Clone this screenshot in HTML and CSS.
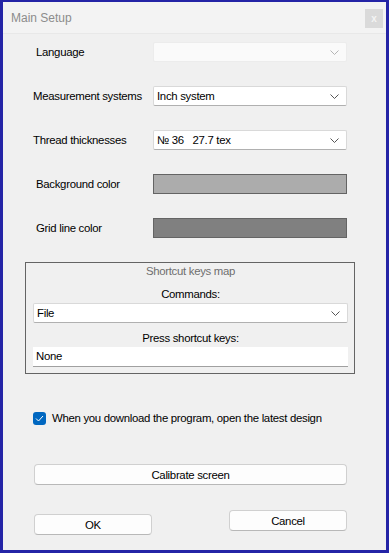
FILE: index.html
```html
<!DOCTYPE html>
<html>
<head>
	<meta charset="UTF-8">
	<title>Main Setup</title>
	<link rel="stylesheet" href="styles.css">
</head>
<body>
	<div class="window">
		<div class="titlebar">
			<span class="title">Main Setup</span>
			<span class="close">x</span>
		</div>
		<div class="content">
			<div class="fields">
				<span class="label indent">Language</span>
				<div class="select disabled">
					<span></span>
					<svg class="chev" width="9" height="5" viewBox="0 0 9 5"><polyline points="0.5,0.5 4.5,4.5 8.5,0.5" fill="none" stroke="#b5b5b5" stroke-width="1"/></svg>
				</div>

				<span class="label">Measurement systems</span>
				<div class="select">
					<span>Inch system</span>
					<svg class="chev" width="9" height="5" viewBox="0 0 9 5"><polyline points="0.5,0.5 4.5,4.5 8.5,0.5" fill="none" stroke="#555" stroke-width="1"/></svg>
				</div>

				<span class="label">Thread thicknesses</span>
				<div class="select">
					<span>№ 36&nbsp;&nbsp;&nbsp;27.7 tex</span>
					<svg class="chev" width="9" height="5" viewBox="0 0 9 5"><polyline points="0.5,0.5 4.5,4.5 8.5,0.5" fill="none" stroke="#555" stroke-width="1"/></svg>
				</div>

				<span class="label indent">Background color</span>
				<div class="swatch bg-color"></div>

				<span class="label indent">Grid line color</span>
				<div class="swatch grid-color"></div>
			</div>

			<div class="group">
				<div class="group-title">Shortcut keys map</div>
				<div class="group-label">Commands:</div>
				<div class="select">
					<span>File</span>
					<svg class="chev" width="9" height="5" viewBox="0 0 9 5"><polyline points="0.5,0.5 4.5,4.5 8.5,0.5" fill="none" stroke="#555" stroke-width="1"/></svg>
				</div>
				<div class="group-label">Press shortcut keys:</div>
				<div class="textbox">None</div>
			</div>

			<label class="check">
				<span class="box">
					<svg width="9" height="7" viewBox="0 0 9 7"><polyline points="1,3.5 3.5,6 8,1" fill="none" stroke="#fff" stroke-width="1"/></svg>
				</span>
				When you download the program, open the latest design
			</label>

			<div class="btn calibrate">Calibrate screen</div>

			<div class="actions">
				<div class="btn ok">OK</div>
				<div class="btn cancel">Cancel</div>
			</div>
		</div>
	</div>
</body>
</html>
```

FILE: styles.css
```css
	html,body{
		margin:0;
		padding:0;
	}
	body{
		font-family:"Liberation Sans",Arial,sans-serif;
		font-size:11.4px;
		letter-spacing:-0.3px;
		color:#000;
		background:#2424a6;
	}
	.window{
		box-sizing:border-box;
		width:389px;
		height:553px;
		border:3px solid #2424a6;
		border-top-width:2px;
		background:#f0f0f0;
	}
	.titlebar{
		display:flex;
		align-items:center;
		justify-content:space-between;
		height:31px;
		padding:0 3px 0 8px;
		background:#f3f3f3;
		border-bottom:1px solid #e8e8e8;
	}
	.title{
		color:#8c8c8c;
		font-size:12px;
		letter-spacing:0;
		margin-top:1px;
	}
	.close{
		display:flex;
		align-items:center;
		justify-content:center;
		width:18px;
		height:19px;
		margin-top:2px;
		background:#dadada;
		color:#f4f4f4;
		font-size:10px;
		font-weight:bold;
	}

	.content{
		padding:8px 0 0 30px;
	}
	.fields{
		display:grid;
		grid-template-columns:120px 194px;
		grid-auto-rows:20px;
		row-gap:24px;
		align-items:center;
	}
	.label{
		white-space:nowrap;
	}
	.label.indent{
		padding-left:3px;
	}

	.select{
		box-sizing:border-box;
		display:flex;
		align-items:center;
		justify-content:space-between;
		height:20px;
		padding:0 7px 0 3px;
		background:#fff;
		border:1px solid #d9d9d9;
		border-bottom-color:#b0b0b0;
		border-radius:2px;
	}
	.select.disabled{
		background:#fafafa;
		border-color:#ececec;
	}
	.swatch{
		box-sizing:border-box;
		height:20px;
		border:1px solid #646464;
	}
	.bg-color{
		background:#acacac;
	}
	.grid-color{
		background:#808080;
	}

	.group{
		box-sizing:border-box;
		width:330px;
		margin:24px 0 0 -8px;
		padding:0 6px 6px 7px;
		border:1px solid #646464;
	}
	.group-title{
		height:16px;
		line-height:16px;
		text-align:center;
		color:#6e6e6e;
	}
	.group-label{
		height:16px;
		line-height:16px;
		margin:7px 0 1px;
		text-align:center;
	}
	.textbox{
		box-sizing:border-box;
		height:20px;
		line-height:19px;
		padding:0 3px;
		background:#fff;
		border-bottom:1px solid #a0a0a0;
	}

	.check{
		display:flex;
		align-items:center;
		gap:6px;
		height:16px;
		margin:36px 0 0 0;
	}
	.check .box{
		display:flex;
		align-items:center;
		justify-content:center;
		width:13px;
		height:13px;
		border-radius:3px;
		background:#0067c0;
	}

	.btn{
		box-sizing:border-box;
		display:flex;
		align-items:center;
		justify-content:center;
		height:21px;
		background:#fdfdfd;
		border:1px solid #d0d0d0;
		border-bottom-color:#b8b8b8;
		border-radius:4px;
	}
	.calibrate{
		width:313px;
		margin:38px 0 0 1px;
	}
	.actions{
		display:flex;
		justify-content:space-between;
		align-items:flex-start;
		width:313px;
		margin:25px 0 0 1px;
	}
	.ok{
		width:118px;
		margin-top:4px;
	}
	.cancel{
		width:118px;
	}
```
